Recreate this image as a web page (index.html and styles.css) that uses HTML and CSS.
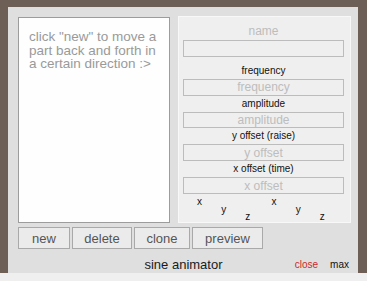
FILE: index.html
```html
<!DOCTYPE html>
<html>
<head>
<meta charset="utf-8">
<link rel="stylesheet" href="styles.css">
</head>
<body>
<div class="frame">
  <div class="panel">
    <div class="main">
      <div class="notes">click "new" to move a part back and forth in a certain direction :&gt;</div>
      <div class="props">
        <div class="name">name</div>
        <input class="field" type="text">
        <div class="label first">frequency</div>
        <input class="field" type="text" placeholder="frequency">
        <div class="label">amplitude</div>
        <input class="field" type="text" placeholder="amplitude">
        <div class="label">y offset (raise)</div>
        <input class="field" type="text" placeholder="y offset">
        <div class="label">x offset (time)</div>
        <input class="field" type="text" placeholder="x offset">
        <div class="axes">
          <span class="ax a1">x</span><span class="ax a2">y</span><span class="ax a3">z</span>
          <span class="ax a1 g2">x</span><span class="ax a2">y</span><span class="ax a3">z</span>
        </div>
      </div>
    </div>
    <div class="buttons">
      <button class="btn b-new">new</button>
      <button class="btn b-delete">delete</button>
      <button class="btn b-clone">clone</button>
      <button class="btn b-preview">preview</button>
    </div>
    <div class="titlebar">
      <span></span>
      <span class="title">sine animator</span>
      <span class="ctrls"><span class="close">close</span><span class="max">max</span></span>
    </div>
  </div>
</div>
<div class="strip"></div>
</body>
</html>
```

FILE: styles.css
```css
html, body {
  margin: 0;
  padding: 0;
}
body {
  background: #6d5e56;
  width: 367px;
  height: 281px;
  overflow: hidden;
  font-family: "Liberation Sans", Arial, sans-serif;
}
.frame {
  height: 273px;
  box-sizing: border-box;
  padding: 7px 0 0 8px;
}
.strip {
  height: 8px;
  background: #efefef;
}
.panel {
  width: 350px;
  height: 266px;
  box-sizing: border-box;
  background: #dfdfdf;
  padding: 9px 7px 0 10px;
  display: flex;
  flex-direction: column;
}
.main {
  display: flex;
  gap: 8px;
  height: 207px;
}
.notes {
  width: 152px;
  height: 206px;
  margin-top: 1px;
  box-sizing: border-box;
  background: #fefefe;
  border: 1px solid #9c9c9c;
  padding: 12px 10px;
  color: #9a9a9a;
  font-size: 13.5px;
  line-height: 13.5px;
}
.props {
  width: 173px;
  height: 207px;
  box-sizing: border-box;
  background: #efefef;
  border: 1px solid #f8f8f8;
  padding: 0 6px 0 4px;
  display: flex;
  flex-direction: column;
}
.name {
  height: 23px;
  box-sizing: border-box;
  padding-top: 6px;
  line-height: 16px;
  text-align: center;
  font-size: 12px;
  color: #bdbdbd;
}
.field {
  display: block;
  width: 161px;
  height: 17px;
  box-sizing: border-box;
  margin: 0;
  padding: 0;
  border: 1px solid #bcbcbc;
  background: #efefef;
  font-family: "Liberation Sans", Arial, sans-serif;
  font-size: 12px;
  text-align: center;
  outline: none;
}
.field::placeholder {
  color: #bdbdbd;
  opacity: 1;
}
.label {
  height: 16px;
  line-height: 16px;
  text-align: center;
  font-size: 10px;
  color: #111;
}
.label.first {
  height: 22px;
  box-sizing: border-box;
  padding-top: 6px;
}
.axes {
  display: flex;
  padding-left: 14px;
  font-size: 10px;
  color: #111;
  line-height: 10px;
}
.ax {
  width: 26px;
}
.a1 { padding-top: 3px; }
.a2 { padding-top: 11px; }
.a3 { padding-top: 18px; }
.g2 { margin-left: 2px; }
.buttons {
  display: flex;
  gap: 2px;
  margin-top: 4px;
  height: 22px;
}
.btn {
  height: 22px;
  box-sizing: border-box;
  margin: 0;
  padding: 0;
  background: #ebebeb;
  border: 1px solid #a9a9a9;
  border-radius: 0;
  color: #555;
  font-family: "Liberation Sans", Arial, sans-serif;
  font-size: 13px;
}
.b-new { width: 52px; }
.b-delete { width: 60px; }
.b-clone { width: 56px; }
.b-preview { width: 71px; }
.titlebar {
  display: grid;
  grid-template-columns: 1fr auto 1fr;
  align-items: center;
  height: 24px;
  padding-right: 2px;
}
.title {
  font-size: 13px;
  color: #1a1a1a;
  padding-top: 6px;
}
.ctrls {
  justify-self: end;
  display: flex;
  gap: 12px;
  font-size: 10px;
  padding-top: 6px;
}
.close { color: #cc2a2a; }
.max { color: #111; }
```
